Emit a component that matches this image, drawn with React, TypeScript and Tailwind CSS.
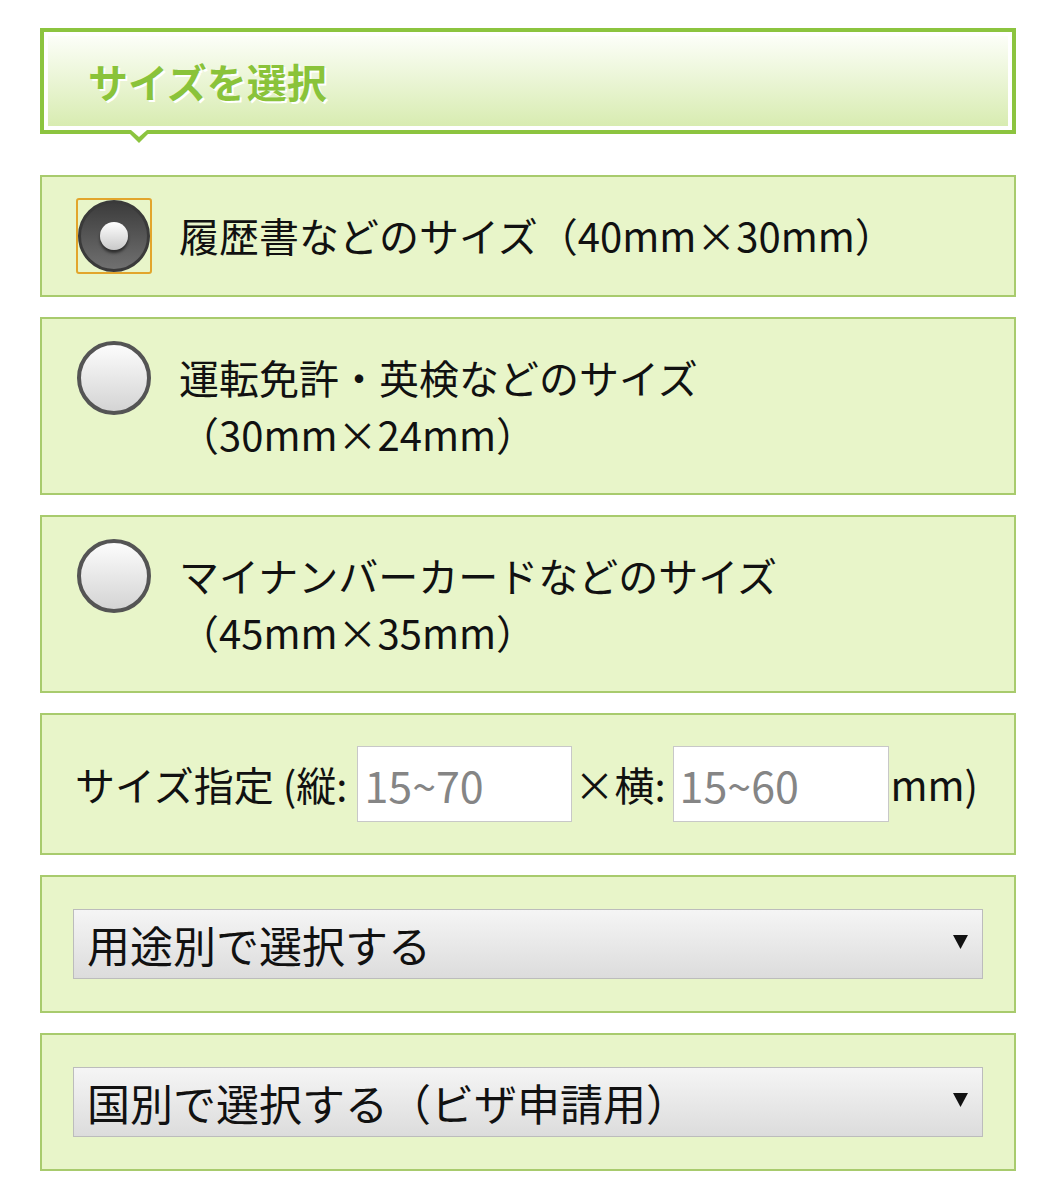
import React from 'react';

interface SizeOption {
    label: string;
    size: string;
    wrap: boolean;
}

const options: SizeOption[] = [
    { label: '履歴書などのサイズ', size: '（40mm×30mm）', wrap: false },
    { label: '運転免許・英検などのサイズ', size: '（30mm×24mm）', wrap: true },
    { label: 'マイナンバーカードなどのサイズ', size: '（45mm×35mm）', wrap: true },
];

const Radio: React.FC<{ checked: boolean }> = ({ checked }) => {
    if (checked) {
        return (
            <div className="w-[76px] h-[76px] shrink-0 rounded-[3px] border-2 border-[#e2a52c] flex items-center justify-center">
                <div className="w-[72px] h-[72px] rounded-full border-[3px] border-[#3a3a3a] bg-[linear-gradient(to_bottom,#3c3c3c,#707070)] flex items-center justify-center">
                    <div className="w-[28px] h-[28px] rounded-full bg-[linear-gradient(to_bottom,#ffffff,#c9c9c9)] shadow-[0_3px_3px_rgba(0,0,0,0.55)]" />
                </div>
            </div>
        );
    }
    return (
        <div className="w-[76px] h-[76px] shrink-0 flex items-center justify-center">
            <div className="w-[74px] h-[74px] rounded-full border-4 border-[#545454] bg-[linear-gradient(to_bottom,#fcfcfc,#d4d4d4)]" />
        </div>
    );
};

const Card: React.FC<{ className?: string; children: React.ReactNode }> = ({ className = '', children }) => (
    <div className={`bg-[#e8f5c9] border-2 border-[#a8cb6d] ${className}`}>{children}</div>
);

const SelectBox: React.FC<{ label: string }> = ({ label }) => (
    <div className="h-[70px] border border-[#bcbcbc] bg-[linear-gradient(to_bottom,#f5f5f5,#dcdcdc)] flex items-center justify-between pl-[13px] pr-[14px]">
        <span className="text-[43px] leading-none text-[#111]">{label}</span>
        <svg width="15" height="15" viewBox="0 0 15 15" className="mt-[-6px]">
            <polygon points="0,1 15,1 7.5,15" fill="#111" />
        </svg>
    </div>
);

const App: React.FC = () => {
    return (
        <div className="bg-white min-h-[1200px] px-[40px] pt-[28px] font-['Noto_Sans_CJK_JP','Noto_Sans',sans-serif]">
            {/* section heading */}
            <div className="relative h-[106px] border-4 border-[#8cc43f] bg-white p-[4px]">
                <div className="h-full flex items-center pl-[40px] bg-[linear-gradient(to_bottom,#fcfef8,#d8ecb1)]">
                    <h2 className="text-[40px] font-bold leading-none text-[#8ac33a] [text-shadow:2px_2px_0_#fff]">サイズを選択</h2>
                </div>
                <svg width="26" height="16" viewBox="0 0 26 16" className="absolute left-[82px] top-[98px]">
                    <polygon points="0,0 26,0 13,13" fill="#8cc43f" />
                    <polygon points="5,0 21,0 13,7" fill="#ffffff" />
                </svg>
            </div>

            <div className="mt-[41px] flex flex-col gap-[20px]">
                {options.map((opt, i) => (
                    <Card key={opt.label} className={`${opt.wrap ? 'h-[178px]' : 'h-[122px]'} pl-[34px] pr-[20px] pt-[30px]`}>
                        <div className="flex items-start">
                            <div className="mt-[-9px]">
                                <Radio checked={i === 0} />
                            </div>
                            <div className="ml-[27px] text-[40px] leading-[57px] text-[#111]">
                                {opt.wrap ? (
                                    <>
                                        <div>{opt.label}</div>
                                        <div>{opt.size}</div>
                                    </>
                                ) : (
                                    <div>{opt.label}{opt.size}</div>
                                )}
                            </div>
                        </div>
                    </Card>
                ))}

                <Card className="h-[142px] pl-[33px] flex items-center text-[40px] text-[#111]">
                    <span className="leading-none">サイズ指定 (縦:</span>
                    <input
                        type="text"
                        placeholder="15~70"
                        className="ml-[10px] w-[215px] h-[76px] border border-[#c8c8c8] bg-white px-[6px] text-[43px] text-[#111] placeholder:text-[#858585] outline-none"
                    />
                    <span className="ml-[2px] leading-none">×横:</span>
                    <input
                        type="text"
                        placeholder="15~60"
                        className="ml-[7px] w-[216px] h-[76px] border border-[#c8c8c8] bg-white px-[6px] text-[43px] text-[#111] placeholder:text-[#858585] outline-none"
                    />
                    <span className="ml-[2px] leading-none">mm)</span>
                </Card>

                <Card className="h-[138px] px-[31px] pt-[32px]">
                    <SelectBox label="用途別で選択する" />
                </Card>

                <Card className="h-[138px] px-[31px] pt-[32px]">
                    <SelectBox label="国別で選択する（ビザ申請用）" />
                </Card>
            </div>
        </div>
    );
};

export default App;
